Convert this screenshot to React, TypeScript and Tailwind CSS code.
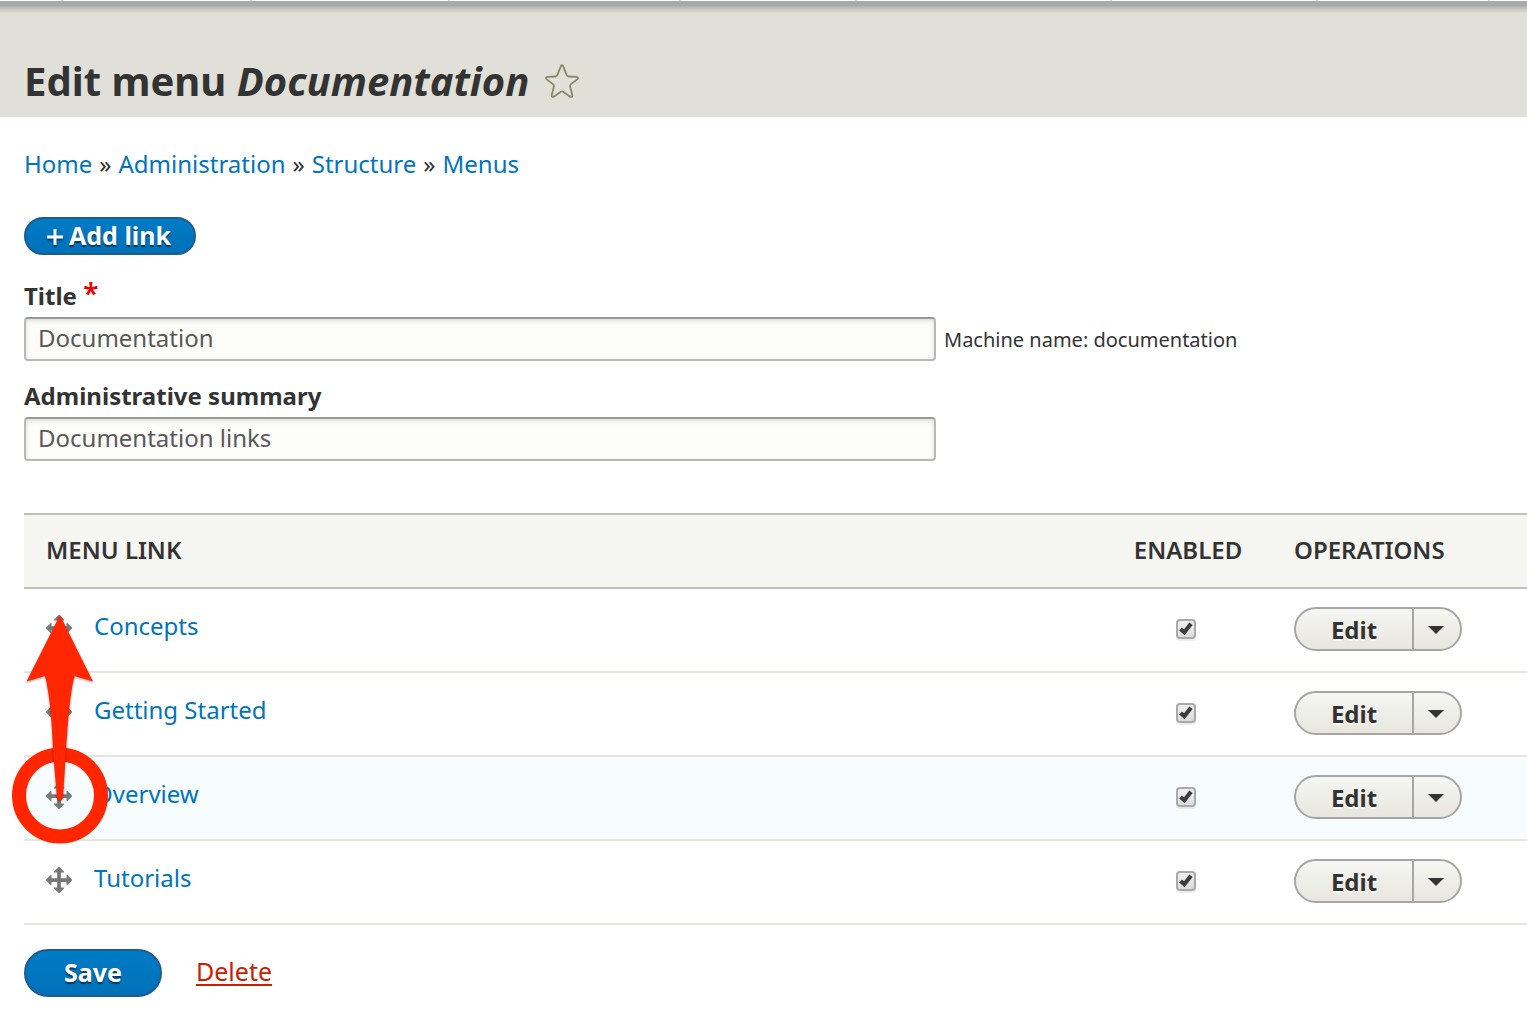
import { useState } from "react";

const crumbs = ["Home", "Administration", "Structure", "Menus"];

const menuLinks = [
  { name: "Concepts", active: false },
  { name: "Getting Started", active: false },
  { name: "Overview", active: true },
  { name: "Tutorials", active: false },
];

function StarIcon() {
  return (
    <svg viewBox="0 0 34 34" className="size-[34px]" fill="none" stroke="#87876a" strokeWidth="1.8" strokeLinejoin="round" aria-hidden="true">
      <path d="M15.9 2.2Q17 .2 18.1 2.2L21.6 10.8Q22 12 23.3 12.5L31.8 12.9Q34 13.6 32.3 15.4L25.7 20.4Q25 21.4 25.1 22.5L27.3 31.2Q27.4 33.4 25.2 32.7L18.2 27.8Q17 27.1 15.8 27.8L8.8 32.7Q6.6 33.4 6.7 31.2L8.9 22.5Q9 21.4 8.3 20.4L1.7 15.4Q0 13.6 2.2 12.9L10.7 12.5Q12 12 12.4 10.8Z" />
    </svg>
  );
}

function PlusIcon() {
  return (
    <svg viewBox="0 0 16 16" className="size-4 overflow-visible drop-shadow-[0_2px_1px_rgba(0,0,0,0.5)]" stroke="#fff" strokeWidth="3" aria-hidden="true">
      <path d="M8 1V17M0 9H16" />
    </svg>
  );
}

function MoveIcon() {
  return (
    <svg viewBox="0 0 16 16" className="size-[30px]" fill="#787878" aria-hidden="true">
      <path d="M14.904 7.753l-2.373-2.372c-.291-.292-.529-.193-.529.22v1.399h-3v-3h1.398c.414 0 .512-.239.221-.53l-2.371-2.372c-.137-.136-.36-.136-.497 0l-2.372 2.372c-.292.292-.193.53.22.53h1.399v3h-3v-1.369c0-.413-.239-.511-.53-.22l-2.372 2.372c-.136.136-.136.359 0 .494l2.372 2.372c.291.292.53.192.53-.219v-1.43h3v3h-1.4c-.413 0-.511.238-.22.529l2.374 2.373c.137.137.36.137.495 0l2.373-2.373c.29-.291.19-.529-.222-.529h-1.4v-3h3v1.4c0 .413.238.511.529.22l2.373-2.374c.137-.135.137-.357 0-.493z" />
    </svg>
  );
}

function DragArrow() {
  return (
    <svg viewBox="0 0 100 236" className="pointer-events-none absolute -left-3.5 top-[98px] h-[236px] w-[100px]" aria-hidden="true">
      <circle cx="50" cy="184.500" r="41" fill="none" stroke="#ff2600" strokeWidth="14" />
      <path
        d="M50 4L83 70.500L64.500 65C60 82 58 110 56 140L53 187Q50 193 47 187L43 140C42 110 39.500 82 35 65L16.500 70.500Z"
        fill="#ff2600"
        className="drop-shadow-[0_1px_1px_rgba(0,0,0,0.4)]"
      />
    </svg>
  );
}

function Checkbox({ label }: { label: string }) {
  const [checked, setChecked] = useState(true);
  return (
    <span className="relative block size-5">
      <input
        type="checkbox"
        aria-label={label}
        checked={checked}
        onChange={() => setChecked(!checked)}
        className="block size-5 appearance-none rounded-[4px] border-2 border-[#a9a9a9] bg-linear-to-b from-[#efefef] to-[#dcdcdc] shadow-[0_2px_1px_rgba(0,0,0,0.08)]"
      />
      {checked && (
        <svg viewBox="0 0 20 20" className="pointer-events-none absolute inset-0 size-5" fill="none" stroke="#3d3d3d" strokeWidth="4.2" aria-hidden="true">
          <path d="M4.500 10L8.300 13.200L15 4.800" />
        </svg>
      )}
    </span>
  );
}

function TextField({ id, value }: { id: string; value: string }) {
  return (
    <input
      id={id}
      type="text"
      defaultValue={value}
      className="h-11 w-[912px] max-w-full rounded-[4px] border-2 border-[#b8b8b8] border-t-[#999] bg-[#fcfcfa] px-3 pb-1 text-2xl text-[#595959] shadow-[inset_0_2px_4px_rgba(0,0,0,0.125)]"
    />
  );
}

export default function App() {
  return (
    <div className="overflow-x-hidden bg-white font-['Noto_Sans','Lucida_Grande',sans-serif] text-2xl text-[#333]">
      <div className="flex h-px bg-white">
        <div className="w-[4.1%] border-r-2 border-[#ddd]" />
        <div className="w-[12.4%] border-r-2 border-[#ddd]" />
        <div className="w-[13%] border-r-2 border-[#ddd]" />
        <div className="w-[15.100%] border-r-2 border-[#ddd]" />
        <div className="w-[11.500%] border-r-2 border-[#ddd]" />
        <div className="w-[16.700%] border-r-2 border-[#ddd]" />
        <div className="w-[13.500%] border-r-2 border-[#ddd]" />
        <div className="w-[11.300%] border-r-2 border-[#ddd]" />
      </div>
      <header className="bg-[#e0e0d8]">
        <div className="h-3 bg-linear-to-b from-[#a8aaa9] from-40% via-[#b8b8b4] via-50% to-[#e0e0d8]" />
        <div className="flex items-center gap-4 px-6 pt-10 pb-2">
          <h1 className="text-[40px] leading-14 font-bold">
            Edit menu <em>Documentation</em>
          </h1>
          <button type="button" aria-label="Add to shortcuts">
            <StarIcon />
          </button>
        </div>
      </header>

      <main className="pl-6">
        <nav aria-label="Breadcrumb" className="pt-[27px]">
          <ol className="flex leading-10">
            {crumbs.map((crumb, i) => (
              <li key={crumb}>
                {i > 0 && <span className="px-[7px]">»</span>}
                <a href="#" className="text-[#0074bd]">{crumb}</a>
              </li>
            ))}
          </ol>
        </nav>

        <a
          href="#"
          className="mt-[33px] inline-flex h-[38px] items-center gap-1.5 rounded-full border-2 border-[#1e5c90] bg-linear-to-b from-[#007bc6] to-[#0071b8] pr-[23px] pl-[21px] text-[25px] font-bold text-white text-shadow-[0_2px_1px_rgba(0,0,0,0.5)]"
        >
          <PlusIcon />
          Add link
        </a>

        <form onSubmit={(e) => e.preventDefault()}>
          <div className="mt-5">
            <label htmlFor="title" className="block h-[42px] leading-[42px] font-bold">
              Title <span className="align-top text-[28px] leading-9 font-semibold text-[#e00]">*</span>
            </label>
            <div className="flex items-center gap-2">
              <TextField id="title" value="Documentation" />
              <span className="pt-0.5 text-xl whitespace-nowrap">Machine name: documentation</span>
            </div>
          </div>
          <div className="mt-3.5">
            <label htmlFor="summary" className="block leading-[42px] font-bold">Administrative summary</label>
            <TextField id="summary" value="Documentation links" />
          </div>

          <div className="relative mt-[52px]">
            <table className="w-full table-fixed border-collapse">
              <thead>
                <tr className="h-[74px] border-y-2 border-[#bfbfba] bg-[#f5f5f2] text-left uppercase">
                  <th className="pb-0.5 pl-[22px] font-semibold">Menu link</th>
                  <th className="w-[162px] pr-0.5 pb-0.5 text-center font-semibold">Enabled</th>
                  <th className="w-[257px] pb-0.5 pl-6 font-semibold">Operations</th>
                </tr>
              </thead>
              <tbody>
                {menuLinks.map(({ name, active }) => (
                  <tr key={name} className={active ? "h-[84px] border-b-2 border-[#e6e4df] bg-[#f7fcff]" : "h-[84px] border-b-2 border-[#e6e4df]"}>
                    <td className="pl-5">
                      <div className="flex items-center gap-5 pb-1">
                        <button type="button" aria-label={`Move ${name}`} className="cursor-move">
                          <MoveIcon />
                        </button>
                        <a href="#" className="pb-1 text-[#0074bd]">{name}</a>
                      </div>
                    </td>
                    <td>
                      <div className="flex justify-center pr-1.5 pb-0.5">
                        <Checkbox label={`Enable ${name}`} />
                      </div>
                    </td>
                    <td className="pb-0.5 pl-6">
                      <div className="inline-flex h-11 overflow-hidden rounded-full border-2 border-[#a6a6a6] bg-linear-to-b from-[#f6f6f3] to-[#e7e7df] align-middle">
                        <button type="button" className="w-[118px] border-r-2 border-[#a6a6a6] pt-0.5 font-bold text-shadow-[0_2px_0_rgba(255,255,255,0.6)]">
                          Edit
                        </button>
                        <button type="button" aria-label={`More operations for ${name}`} className="flex w-[46px] items-center justify-center pt-0.5 pr-0.5">
                          <svg viewBox="0 0 16 8" className="h-2 w-4" fill="#333" aria-hidden="true">
                            <path d="M0 0H16L8 8Z" />
                          </svg>
                        </button>
                      </div>
                    </td>
                  </tr>
                ))}
              </tbody>
            </table>
            <DragArrow />
          </div>

          <div className="flex items-center gap-[34px] pt-6 pb-10">
            <button
              type="submit"
              className="h-12 w-[138px] rounded-full border-2 border-[#1e5c90] bg-linear-to-b from-[#007bc6] to-[#0071b8] text-[25px] font-bold text-white text-shadow-[0_2px_1px_rgba(0,0,0,0.5)]"
            >
              Save
            </button>
            <a href="#" className="pb-0.5 text-[25px] text-[#c72100] underline decoration-2 underline-offset-3">Delete</a>
          </div>
        </form>
      </main>
    </div>
  );
}
